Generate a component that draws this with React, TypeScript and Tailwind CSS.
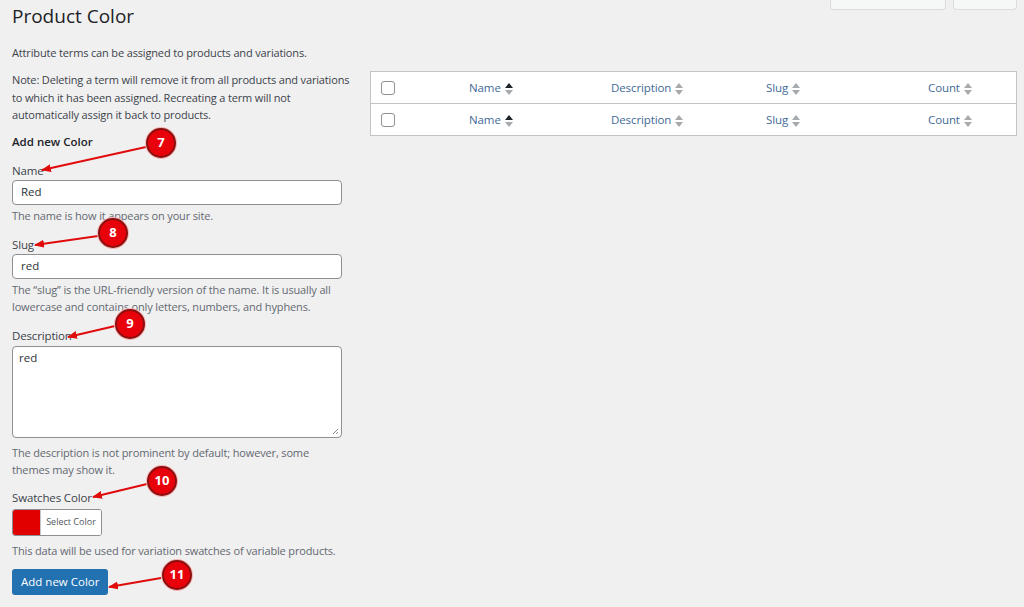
import React from "react";

const font = { fontFamily: '"Open Sans", "Noto Sans", Arial, sans-serif' };

function SortIcon({ active }: { active?: boolean }) {
  return (
    <svg width="8" height="12" viewBox="0 0 8 12" className="ml-1 inline-block">
      <path d="M4 0 L8 5 L0 5 Z" fill={active ? "#1d2327" : "#a7aaad"} />
      <path d="M0 7 L8 7 L4 12 Z" fill="#a7aaad" />
    </svg>
  );
}

function HeaderRow() {
  return (
    <div className="flex h-[31px] items-center bg-white text-[11.5px] tracking-[-0.1px] text-[#3f6a98]">
      <div className="flex w-[73px] justify-start pl-[10px]">
        <span className="h-[14px] w-[14px] rounded-[3px] border border-[#8c8f94] bg-white" />
      </div>
      <div className="w-[142px] pl-[25px]">
        Name
        <SortIcon active />
      </div>
      <div className="w-[155px] pl-[25px]">
        Description
        <SortIcon />
      </div>
      <div className="w-[162px] pl-[25px]">
        Slug
        <SortIcon />
      </div>
      <div className="flex-1 pl-[25px]">
        Count
        <SortIcon />
      </div>
    </div>
  );
}

const help = "text-[11px] leading-[17px] tracking-[-0.15px] text-[#646970]";
const label = "text-[11.5px] leading-[18px] tracking-[-0.15px] text-[#3c434a]";
const input =
  "flex h-[25px] w-[330px] items-center rounded border border-[#8c8f94] bg-white px-[8px] text-[11.5px] text-[#2c3338]";

function Badge({ n, x, y }: { n: string; x: number; y: number }) {
  return (
    <div
      className="absolute flex h-[30px] w-[30px] items-center justify-center rounded-full border-2 border-[#8a1010] bg-[#e8000b] text-[13px] font-bold text-white shadow-[0_0_0_1px_#f4b5b5]"
      style={{ left: x - 15, top: y - 15 }}
    >
      {n}
    </div>
  );
}

const arrows = [
  { x1: 146, y1: 147, x2: 42, y2: 170 },
  { x1: 98, y1: 236, x2: 35, y2: 245 },
  { x1: 115, y1: 326, x2: 68, y2: 337 },
  { x1: 147, y1: 484, x2: 93, y2: 497 },
  { x1: 161, y1: 578, x2: 109, y2: 587 },
];

export default function App() {
  return (
    <div className="relative h-[607px] w-[1024px] overflow-hidden bg-[#f0f0f1]" style={font}>
      {/* screen options / help tabs */}
      <div className="flex justify-end gap-[7px] pr-[7px]">
        <div className="-mt-[20px] h-[30px] w-[116px] rounded-b border border-t-0 border-[#dcdcde] bg-[#f6f7f7]" />
        <div className="-mt-[20px] h-[30px] w-[64px] rounded-b border border-t-0 border-[#dcdcde] bg-[#f6f7f7]" />
      </div>

      <div className="-mt-[10px] flex gap-[18px] pl-[12px] pr-[7px]">
        {/* left form column */}
        <div className="w-[340px] shrink-0">
          <h1 className="pt-[2px] text-[19px] leading-[28px] text-[#1d2327]">Product Color</h1>
          <p className="mt-[14px] text-[11px] leading-[17px] tracking-[-0.15px] text-[#3c434a]">
            Attribute terms can be assigned to products and variations.
          </p>
          <p className="mt-[10px] text-[11px] leading-[17.5px] tracking-[-0.15px] text-[#3c434a]">
            Note: Deleting a term will remove it from all products and variations to which it has been assigned.
            Recreating a term will not automatically assign it back to products.
          </p>
          <h2 className="mt-[9px] text-[11.5px] font-semibold leading-[18px] text-[#1d2327]">Add new Color</h2>

          <div className="mt-[11px]">
            <div className={label}>Name</div>
            <div className={input}>Red</div>
            <p className={`mt-[2px] ${help}`}>The name is how it appears on your site.</p>
          </div>

          <div className="mt-[12px]">
            <div className={label}>Slug</div>
            <div className={input}>red</div>
            <p className={`mt-[2px] ${help}`}>
              The &ldquo;slug&rdquo; is the URL-friendly version of the name. It is usually all lowercase and contains
              only letters, numbers, and hyphens.
            </p>
          </div>

          <div className="mt-[12px]">
            <div className={label}>Description</div>
            <div className="relative mt-[1px] h-[92px] w-[330px] rounded border border-[#8c8f94] bg-white px-[6px] pt-[2px] text-[11.5px] text-[#2c3338]">
              red
              <svg width="7" height="7" viewBox="0 0 7 7" className="absolute bottom-[2px] right-[2px]">
                <path d="M6 1 L1 6 M6 4 L4 6" stroke="#8c8f94" strokeWidth="1" />
              </svg>
            </div>
            <p className={`mt-[6px] w-[330px] ${help}`}>
              The description is not prominent by default; however, some themes may show it.
            </p>
          </div>

          <div className="mt-[11px]">
            <div className={label}>Swatches Color</div>
            <div className="mt-[2px] flex h-[27px] w-[90px] overflow-hidden rounded-[3px] border border-[#8c8f94] bg-[#f6f7f7]">
              <div className="w-[27px] bg-[#e00000]" />
              <div className="flex flex-1 items-center justify-center border-l border-[#c3c4c7] bg-white text-[9px] text-[#50575e]">
                Select Color
              </div>
            </div>
            <p className={`mt-[6px] ${help}`}>This data will be used for variation swatches of variable products.</p>
          </div>
          <button className="mt-[10px] h-[26px] rounded-[3px] bg-[#2271b1] px-[9px] text-[11.5px] text-white">
            Add new Color
          </button>
        </div>

        {/* right table column */}
        <div className="flex-1 pt-[71px]">
          <div className="border border-[#c3c4c7] bg-[#c3c4c7]">
            <HeaderRow />
            <div className="h-[1px]" />
            <HeaderRow />
          </div>
        </div>
      </div>

      {/* annotations */}
      <svg className="pointer-events-none absolute inset-0" width="1024" height="607">
        <defs>
          <marker id="ah" markerWidth="10" markerHeight="8" refX="9" refY="4" orient="auto" markerUnits="userSpaceOnUse">
            <path d="M0 0 L10 4 L0 8 Z" fill="#e00b0b" />
          </marker>
        </defs>
        {arrows.map((a, i) => (
          <line key={i} x1={a.x1} y1={a.y1} x2={a.x2} y2={a.y2} stroke="#e00b0b" strokeWidth="2" markerEnd="url(#ah)" />
        ))}
      </svg>
      <Badge n="7" x={161} y={143} />
      <Badge n="8" x={113} y={233} />
      <Badge n="9" x={130} y={324} />
      <Badge n="10" x={162} y={481} />
      <Badge n="11" x={177} y={575} />
    </div>
  );
}
